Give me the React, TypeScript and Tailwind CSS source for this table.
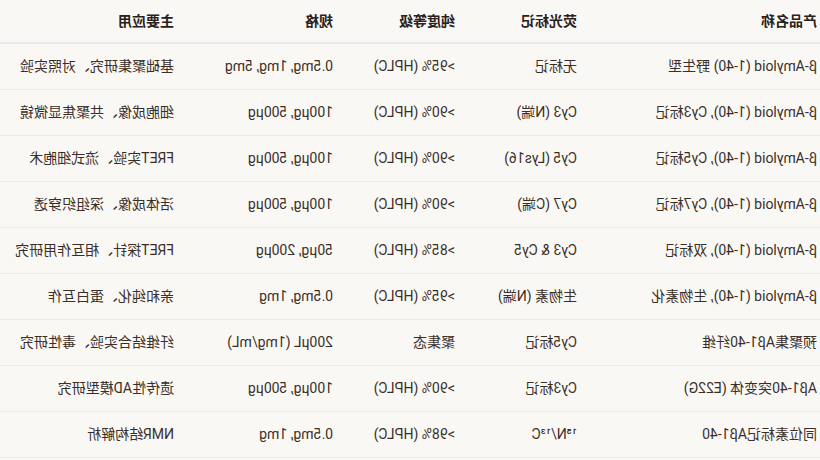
import React from "react";

type Row = {
  name: string;
  label: string;
  purity: string;
  spec: string;
  usage: string;
};

const headers = ["产品名称", "荧光标记", "纯度等级", "规格", "主要应用"];

const rows: Row[] = [
  { name: "β-Amyloid (1-40) 野生型", label: "无标记", purity: ">95% (HPLC)", spec: "0.5mg, 1mg, 5mg", usage: "基础聚集研究、对照实验" },
  { name: "β-Amyloid (1-40), Cy3标记", label: "Cy3 (N端)", purity: ">90% (HPLC)", spec: "100μg, 500μg", usage: "细胞成像、共聚焦显微镜" },
  { name: "β-Amyloid (1-40), Cy5标记", label: "Cy5 (Lys16)", purity: ">90% (HPLC)", spec: "100μg, 500μg", usage: "FRET实验、流式细胞术" },
  { name: "β-Amyloid (1-40), Cy7标记", label: "Cy7 (C端)", purity: ">90% (HPLC)", spec: "100μg, 500μg", usage: "活体成像、深组织穿透" },
  { name: "β-Amyloid (1-40), 双标记", label: "Cy3 & Cy5", purity: ">85% (HPLC)", spec: "50μg, 200μg", usage: "FRET探针、相互作用研究" },
  { name: "β-Amyloid (1-40), 生物素化", label: "生物素 (N端)", purity: ">95% (HPLC)", spec: "0.5mg, 1mg", usage: "亲和纯化、蛋白互作" },
  { name: "预聚集Aβ1-40纤维", label: "Cy5标记", purity: "聚集态", spec: "200μL (1mg/mL)", usage: "纤维结合实验、毒性研究" },
  { name: "Aβ1-40突变体 (E22G)", label: "Cy3标记", purity: ">90% (HPLC)", spec: "100μg, 500μg", usage: "遗传性AD模型研究" },
  { name: "同位素标记Aβ1-40", label: "¹⁵N/¹³C", purity: ">98% (HPLC)", spec: "0.5mg, 1mg", usage: "NMR结构解析" },
];

const grid = "grid grid-cols-[240px_122px_122px_159px_1fr]";

export default function App() {
  return (
    <div className="w-[820px] h-[460px] overflow-hidden bg-[#faf8f5] -scale-x-100 font-['Roboto','Noto_Sans_CJK_SC',sans-serif] text-[14px]">
      <div className={`${grid} h-[44px] items-center border-b-2 border-[#ebe8ec]`}>
        {headers.map((h) => (
          <div key={h} className="pl-[3px] font-bold text-[#2a201a] whitespace-nowrap">
            {h}
          </div>
        ))}
      </div>
      {rows.map((r) => (
        <div key={r.name} className={`${grid} h-[46px] items-center border-b border-[#eeebe7] text-[#3a2f28]`}>
          <div className="pl-[3px] whitespace-nowrap">{r.name}</div>
          <div className="pl-[3px] whitespace-nowrap">{r.label}</div>
          <div className="pl-[3px] whitespace-nowrap">{r.purity}</div>
          <div className="pl-[3px] whitespace-nowrap">{r.spec}</div>
          <div className="pl-[3px] whitespace-nowrap">{r.usage}</div>
        </div>
      ))}
    </div>
  );
}
